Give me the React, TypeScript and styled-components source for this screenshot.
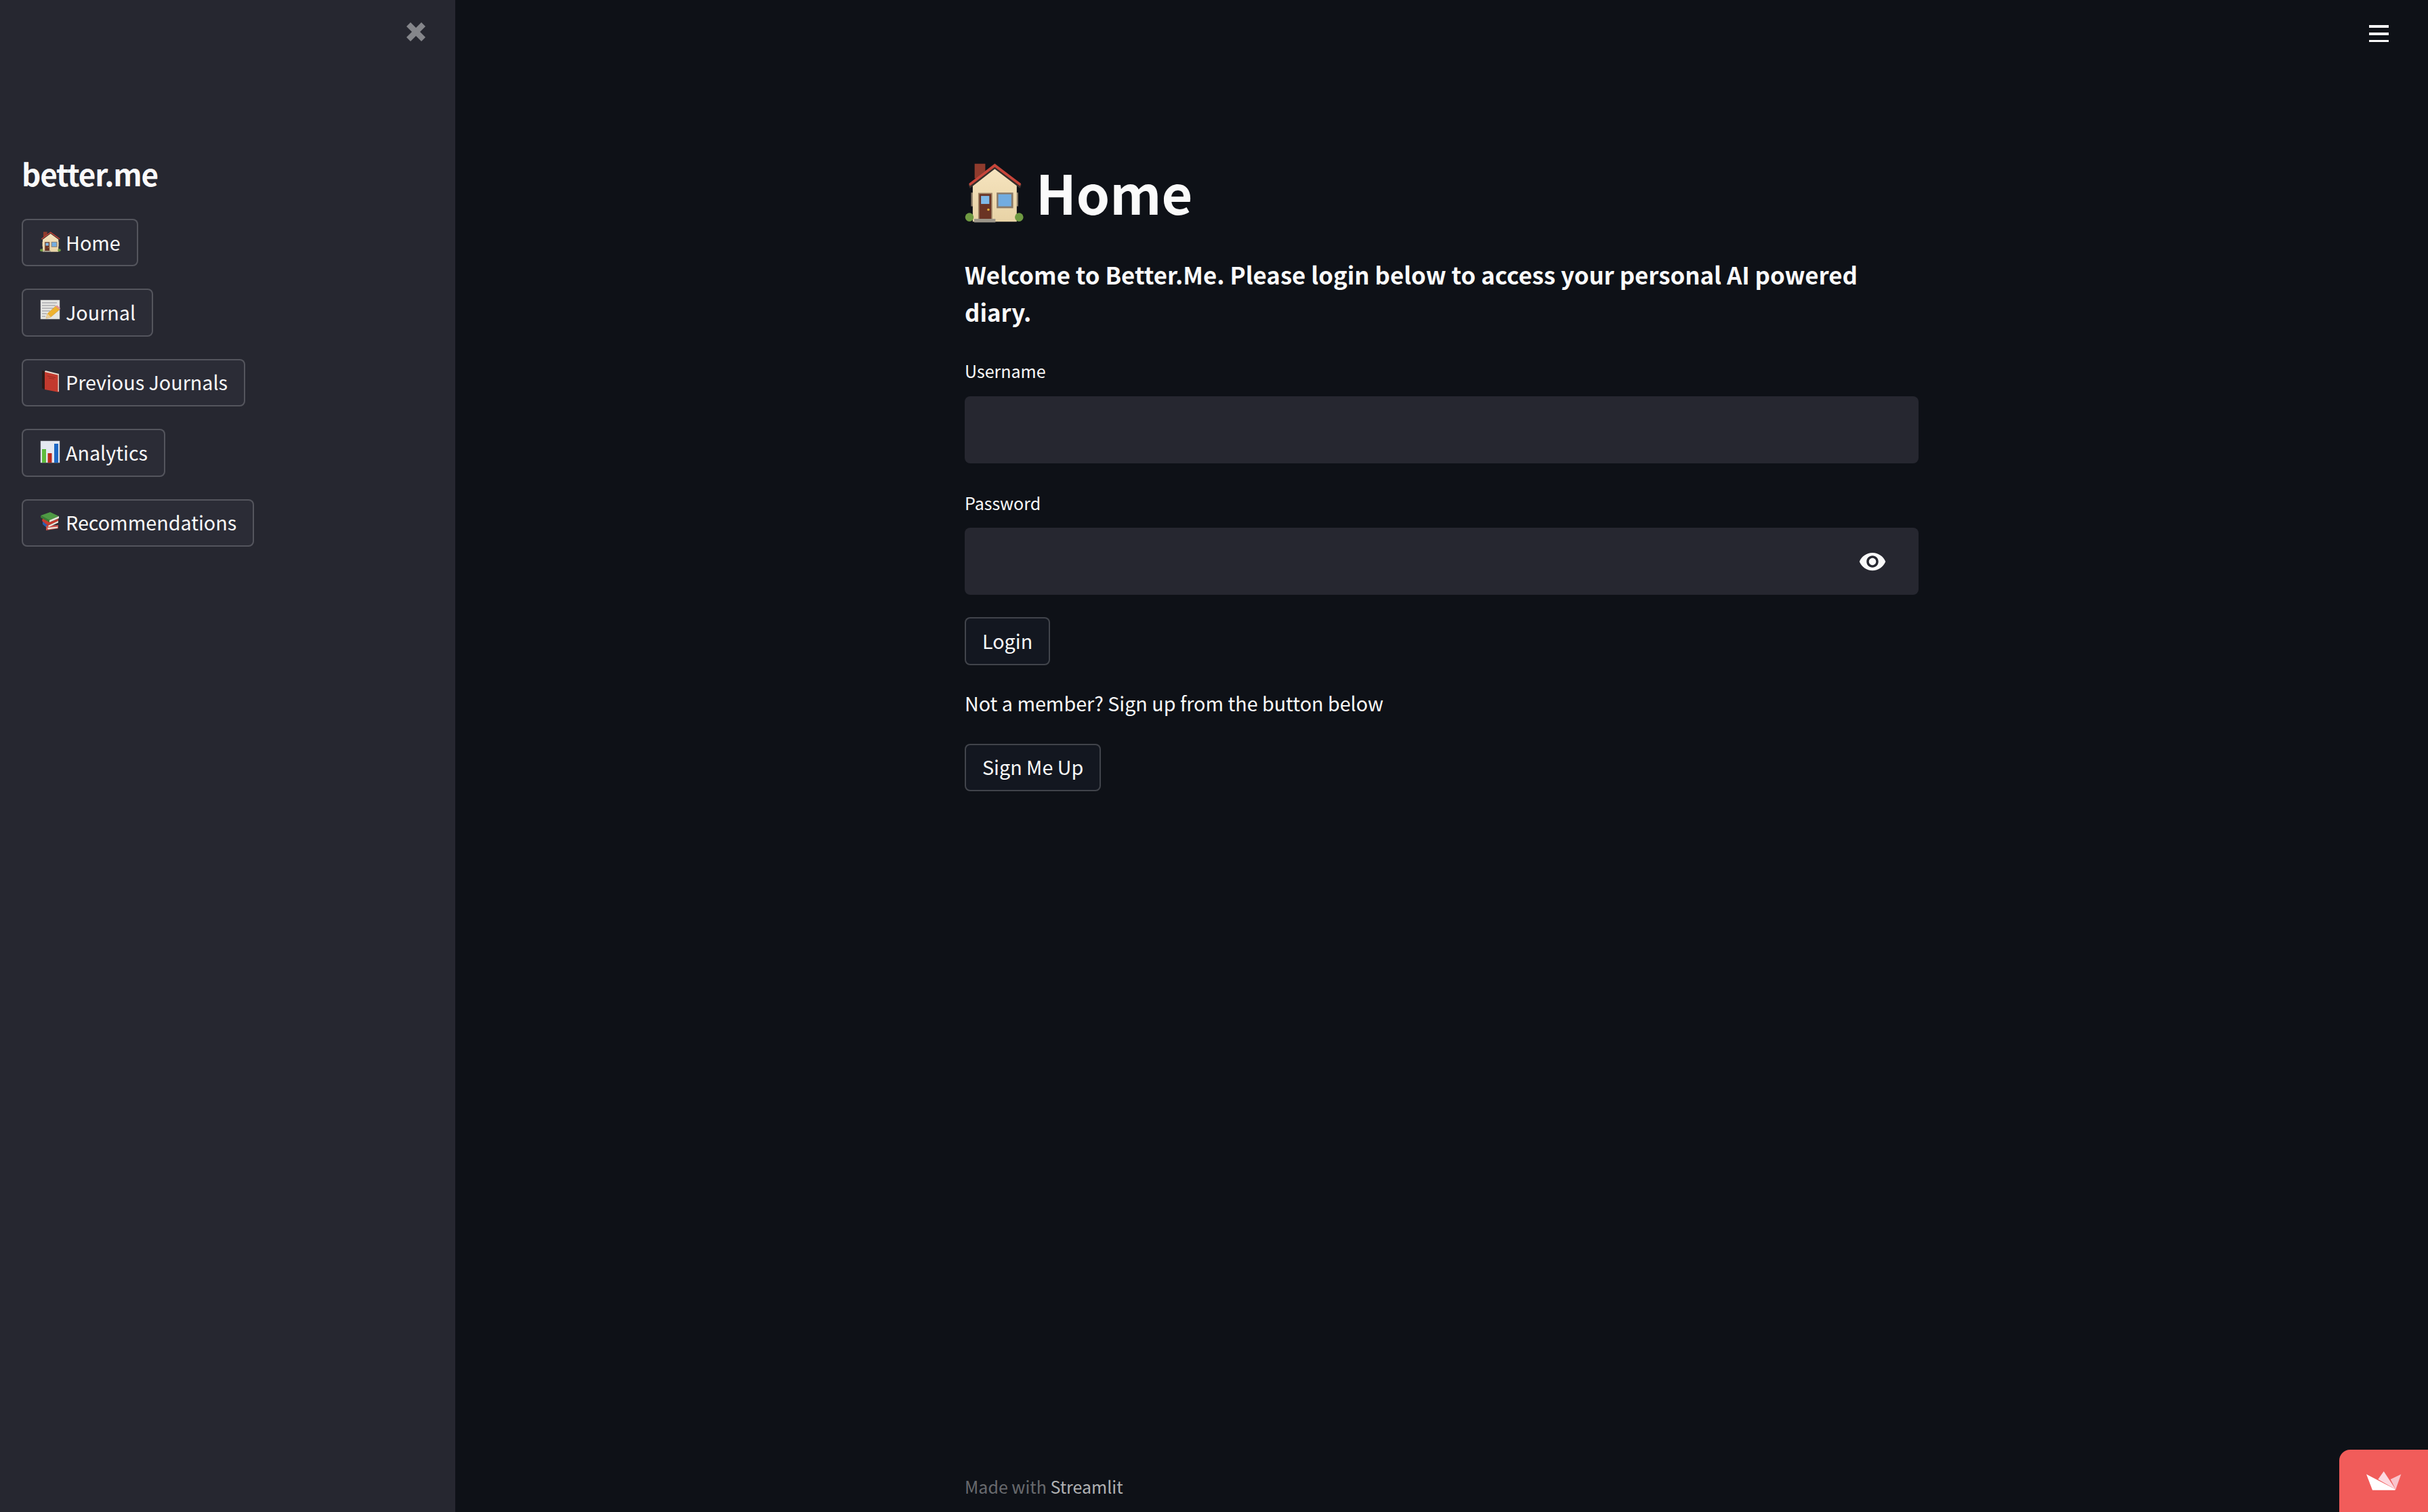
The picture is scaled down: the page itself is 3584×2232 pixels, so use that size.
// App.tsx
import React from 'react';
import styled, { createGlobalStyle } from 'styled-components';
import { MdVisibility } from 'react-icons/md';

const fontStack = `"Noto Sans CJK JP", "Noto Sans", sans-serif`;

const GlobalStyle = createGlobalStyle`
  html, body {
    margin: 0;
    padding: 0;
    height: 100%;
    background-color: #0e1117;
  }
  #root {
    height: 100%;
  }
  * {
    box-sizing: border-box;
  }
`;

const PageContainer = styled.div`
  position: relative;
  height: 100vh;
  display: flex;
  overflow: hidden;
  font-family: ${fontStack};
  color: #fafafa;
`;

const Sidebar = styled.aside`
  width: 672px;
  flex-shrink: 0;
  background-color: #262730;
  display: flex;
  flex-direction: column;
  padding: 32px 32px 0;
`;

const SidebarTop = styled.div`
  display: flex;
  justify-content: flex-end;
  padding-right: 11px;
  height: 192px;
`;

const CloseIcon = styled.svg`
  width: 30px;
  height: 30px;
  color: rgba(250, 250, 250, 0.45);
`;

const Brand = styled.h2`
  font-size: 44px;
  line-height: 64px;
  font-weight: 700;
  letter-spacing: -1.2px;
  margin: 0 0 35px;
  height: 64px;
`;

const NavList = styled.nav`
  display: flex;
  flex-direction: column;
  align-items: flex-start;
  gap: 33px;
`;

const Button = styled.button<{ $sidebar?: boolean }>`
  display: inline-flex;
  align-items: center;
  height: 70.4px;
  padding: 0 24px 1px;
  border: 2px solid rgba(250, 250, 250, 0.2);
  border-radius: 8px;
  background-color: ${(p) => (p.$sidebar ? '#2b2c36' : '#131720')};
  color: #fafafa;
  font-family: ${fontStack};
  font-size: 28.7px;
  line-height: 40px;
  white-space: pre;
`;

const EmojiBox = styled.svg`
  width: 32px;
  height: 32px;
  flex-shrink: 0;
  margin-right: 7px;
  overflow: visible;
`;

const Main = styled.main`
  flex: 1;
  min-width: 0;
  display: flex;
  flex-direction: column;
  align-items: center;
`;

const Content = styled.section`
  width: 1408px;
  flex: 1;
  padding-top: 241px;
  display: flex;
  flex-direction: column;
`;

const PageTitle = styled.h1`
  display: flex;
  align-items: flex-start;
  margin: 0 0 49px;
  height: 88px;
  font-size: 79px;
  font-weight: 700;
  line-height: 84px;
`;

const TitleEmoji = styled.svg`
  width: 88px;
  height: 88px;
  margin-right: 17px;
`;

const Welcome = styled.h3`
  margin: 0 0 41px;
  font-size: 34.8px;
  line-height: 55px;
  font-weight: 700;
`;

const FieldLabel = styled.label`
  display: block;
  font-size: 25px;
  line-height: 36px;
  margin-bottom: 19.6px;
`;

const Field = styled.div<{ $gap: number }>`
  margin-bottom: ${(p) => p.$gap}px;
`;

const InputWrap = styled.div`
  display: flex;
  align-items: center;
  height: 99px;
  background-color: #262730;
  border-radius: 8px;
`;

const TextInput = styled.input`
  flex: 1;
  min-width: 0;
  height: 100%;
  padding: 0 24px;
  border: none;
  outline: none;
  background: transparent;
  color: #fafafa;
  font-family: ${fontStack};
  font-size: 28.7px;
`;

const EyeButton = styled.span`
  display: flex;
  width: 42px;
  height: 42px;
  margin-right: 47px;
  color: #fafafa;
`;

const Hint = styled.p`
  margin: 36px 0 40px;
  font-size: 28.7px;
  line-height: 40px;
`;

const ButtonRow = styled.div`
  display: flex;
`;

const Footer = styled.footer`
  width: 1408px;
  height: 58px;
  flex-shrink: 0;
  font-size: 25px;
  line-height: 40px;
  color: rgba(250, 250, 250, 0.4);

  span {
    color: rgba(250, 250, 250, 0.7);
  }
`;

const MenuIcon = styled.svg`
  position: absolute;
  top: 36px;
  right: 58px;
  width: 29px;
  height: 26px;
`;

const Badge = styled.div`
  position: absolute;
  right: 0;
  bottom: 0;
  width: 131px;
  height: 92px;
  background-color: #f15c5a;
  border-top-left-radius: 16px;
  display: flex;
  justify-content: center;
  padding: 32px 0 0 0;
`;

const Crown = styled.svg`
  width: 52px;
  height: 28px;
`;

const HouseArt = () => (
  <>
    <defs>
      <linearGradient id="wall" x1="0" y1="0" x2="0" y2="1">
        <stop offset="0" stopColor="#f6e4bf" />
        <stop offset="1" stopColor="#e8d3a6" />
      </linearGradient>
    </defs>
    <rect x="40" y="2" width="45" height="62" fill="#8f3b2d" />
    <rect x="25" y="124" width="10" height="58" fill="#8b7d68" />
    <rect x="216" y="124" width="8" height="58" fill="#8b7d68" />
    <polygon points="32,92 125,18 218,92 218,247 32,247" fill="url(#wall)" />
    <polygon points="14,90 125,0 238,90 232,106 125,24 20,106" fill="#37302c" />
    <polygon points="16,86 125,2 236,86 232,96 125,16 20,96" fill="#c9453a" />
    <rect x="55" y="125" width="60" height="112" fill="#a08668" />
    <rect x="60" y="130" width="50" height="105" fill="#6a3324" />
    <rect x="67" y="138" width="35" height="34" fill="#7fb9e8" />
    <circle cx="98" cy="196" r="5" fill="#e4b23a" />
    <rect x="133" y="124" width="70" height="66" fill="#8a7a68" />
    <rect x="140" y="131" width="55" height="51" fill="#72ace0" />
    <rect x="38" y="235" width="90" height="15" fill="#9a9488" />
    <circle cx="18" cy="228" r="18" fill="#6f9a42" />
    <circle cx="228" cy="228" r="18" fill="#6f9a42" />
  </>
);

const MemoArt = () => (
  <>
    <rect x="2" y="-2" width="28" height="28" fill="#e6e6e3" stroke="#b5b5b2" strokeWidth="0.5" />
    <g stroke="#85858a" strokeWidth="0.9">
      <line x1="4" y1="2" x2="26" y2="2" />
      <line x1="4" y1="6" x2="24" y2="6" />
      <line x1="4" y1="10" x2="21" y2="10" />
      <line x1="4" y1="14" x2="16" y2="14" />
      <line x1="4" y1="18" x2="11" y2="18" />
      <line x1="4" y1="22" x2="9" y2="22" />
    </g>
    <polygon points="12,18 24,7 30,12 17,23 10,25" fill="#eeb22f" stroke="#b9822a" strokeWidth="0.4" />
    <polygon points="24,7 26,5.5 31,10 30,12" fill="#e58f94" />
    <polygon points="12,18 17,23 10,25" fill="#e9cfa0" />
  </>
);

const BookArt = () => (
  <>
    <polygon points="4,-1 8,0 8,27 4,25" fill="#2a1a18" />
    <polygon points="8,0 29,5 29,31 8,27" fill="#c23a2e" />
    <polygon points="9,-1 29,4 29,6 8,1" fill="#e6dcd0" />
    <rect x="27.5" y="5" width="1.5" height="25" fill="#d8d0c6" />
    <g stroke="#8e2a20" strokeWidth="0.8">
      <line x1="12" y1="7" x2="24" y2="9.5" />
      <line x1="14" y1="10" x2="22" y2="11.5" />
    </g>
  </>
);

const ChartArt = () => (
  <>
    <rect x="2" y="-1" width="28" height="32" fill="#e4e9f1" stroke="#aeb3bb" strokeWidth="0.5" />
    <rect x="4" y="11" width="6" height="20" fill="#5ebc3e" />
    <rect x="12.5" y="17" width="6" height="14" fill="#bd2a1c" />
    <rect x="22" y="3" width="6" height="28" fill="#1d68c4" />
  </>
);

const BooksArt = () => (
  <>
    <polygon points="5,13 12,20 12,25 5,19" fill="#2a5fb0" />
    <polygon points="10,21 28,20 28,25 10,28" fill="#c9504a" />
    <polygon points="12,24 27,22.5 27,24.5 13,26.5" fill="#e9e6dc" />
    <polygon points="5,10 15,16 28,11 28,14 13,21 4,14" fill="#c93c2f" />
    <polygon points="13,21 28,14 28,16.5 14,23" fill="#ece8dc" />
    <polygon points="2,6 16,1 29,7 15,13" fill="#4e9a44" />
    <polygon points="2,6 15,13 15,16 2,9" fill="#3c7d36" />
    <polygon points="15,13 29,7 29,10 15,16" fill="#ece8dc" />
  </>
);

const navItems = [
  { label: 'Home', art: <g transform="translate(1 0) scale(0.125 0.12)"><HouseArt /></g> },
  { label: 'Journal', art: <MemoArt /> },
  { label: 'Previous Journals', art: <BookArt /> },
  { label: 'Analytics', art: <ChartArt /> },
  { label: 'Recommendations', art: <BooksArt /> },
];

const App: React.FC = () => {
  return (
    <PageContainer>
      <GlobalStyle />
      <Sidebar>
        <SidebarTop>
          <CloseIcon viewBox="0 0 30 30">
            <path d="M1 7 7 1l8 8 8-8 6 6-8 8 8 8-6 6-8-8-8 8-6-6 8-8z" fill="currentColor" />
          </CloseIcon>
        </SidebarTop>
        <Brand>better.me</Brand>
        <NavList>
          {navItems.map((item) => (
            <Button key={item.label} $sidebar>
              <EmojiBox viewBox="0 0 32 32">{item.art}</EmojiBox>
              {item.label}
            </Button>
          ))}
        </NavList>
      </Sidebar>
      <Main>
        <Content>
          <PageTitle>
            <TitleEmoji viewBox="0 0 248 252"><HouseArt /></TitleEmoji>
            Home
          </PageTitle>
          <Welcome>
            Welcome to Better.Me. Please login below to access your personal AI powered diary.
          </Welcome>
          <Field $gap={40}>
            <FieldLabel>Username</FieldLabel>
            <InputWrap>
              <TextInput type="text" />
            </InputWrap>
          </Field>
          <Field $gap={33}>
            <FieldLabel>Password</FieldLabel>
            <InputWrap>
              <TextInput type="password" />
              <EyeButton>
                <MdVisibility size={42} />
              </EyeButton>
            </InputWrap>
          </Field>
          <ButtonRow>
            <Button>Login</Button>
          </ButtonRow>
          <Hint>Not a member? Sign up from the button below</Hint>
          <ButtonRow>
            <Button>Sign Me Up</Button>
          </ButtonRow>
        </Content>
        <Footer>
          Made with <span>Streamlit</span>
        </Footer>
      </Main>
      <MenuIcon viewBox="0 0 29 26" fill="#fafafa">
        <rect x="0" y="1" width="29" height="4" />
        <rect x="0" y="12" width="29" height="4" />
        <rect x="0" y="23" width="29" height="3" />
      </MenuIcon>
      <Badge>
        <Crown viewBox="0 0 52 28">
          <polygon points="17.3,11.7 25.7,0 43.3,26.7" fill="#fdd9e0" />
          <polygon points="35.7,11.7 51.3,4.3 43.3,26.7" fill="#f9c4cb" />
          <polygon points="0,4.3 43.3,26.7 42,27.7 9,27.7" fill="#ffffff" />
        </Crown>
      </Badge>
    </PageContainer>
  );
};

export default App;
